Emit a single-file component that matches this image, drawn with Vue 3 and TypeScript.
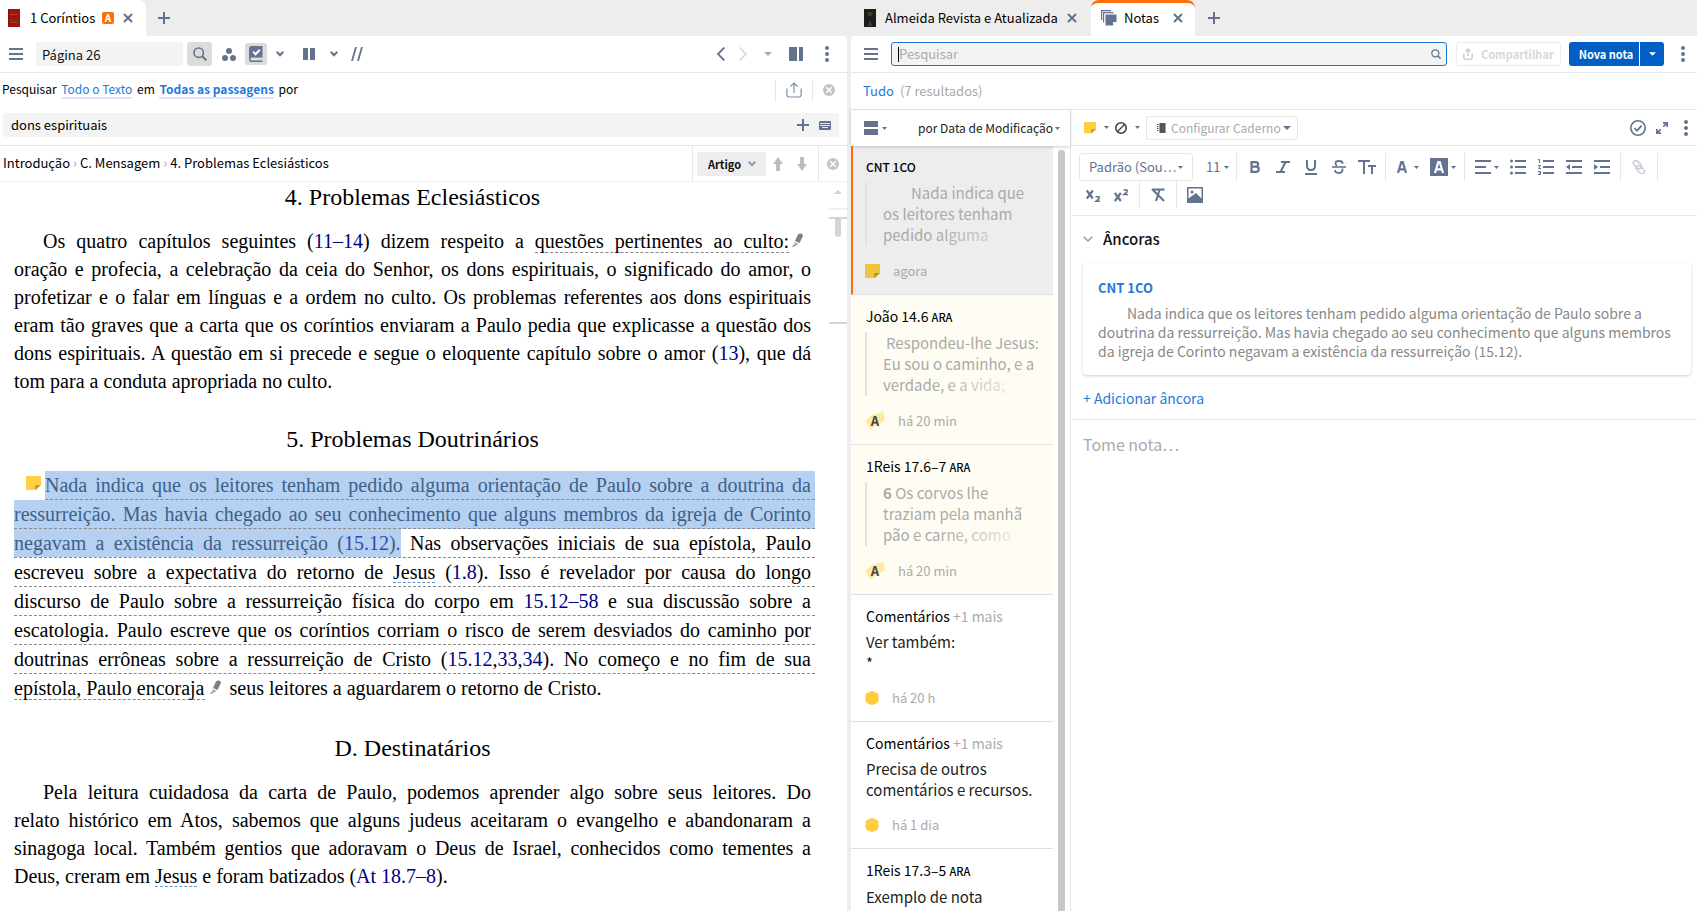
<script setup lang="ts">
import { h, ref } from 'vue'

type Glyph = [number, number, string]

const line = 'fill="none" stroke="currentColor"'
const glyphs: Record<string, Glyph> = {
  menu: [14, 12, '<path d="M0 1h14M0 6h14M0 11h14" stroke="currentColor" stroke-width="2"/>'],
  close: [10, 10, `<path d="M1 1l8 8M9 1l-8 8" ${line} stroke-width="2"/>`],
  plus: [12, 12, `<path d="M6 0v12M0 6h12" ${line} stroke-width="2"/>`],
  search: [14, 14, `<circle cx="5.7" cy="5.7" r="4.7" ${line} stroke-width="1.6"/><path d="M9.2 9.2l4.2 4.2" ${line} stroke-width="2"/>`],
  lens: [10, 10, `<circle cx="4.3" cy="4.3" r="3.5" ${line} stroke-width="1.3"/><path d="M7 7l2.6 2.6" ${line} stroke-width="1.5"/>`],
  trio: [14, 13, '<g fill="currentColor"><circle cx="7" cy="3" r="3"/><circle cx="3" cy="10" r="3"/><circle cx="11" cy="10" r="3"/></g>'],
  bookCheck: [14, 16, '<path fill="currentColor" d="M2.5 0H13.500V11.500H2.500Q1.400 11.500 1.400 13T2.500 14.400H13.500V16H2.500Q0 16 0 13V2.500Q0 0 2.500 0z"/><path d="M4.200 5.800l2.400 2.400 4.200-4.400" fill="none" stroke="#fff" stroke-width="2"/>'],
  chevron: [8, 6, `<path d="M.7.8L4 4.200 7.300.8" ${line} stroke-width="2"/>`],
  thinChevron: [10, 6, `<path d="M.7.7L5 5 9.300.7" ${line} stroke-width="1.4"/>`],
  columns: [12, 12, '<path fill="currentColor" d="M0 0h5v12H0zM7 0h5v12H7z"/>'],
  slashes: [12, 14, `<path d="M1 14L5 0M7 14l4-14" ${line} stroke-width="1.8"/>`],
  back: [8, 14, `<path d="M7.300 .5L1 7l6.300 6.500" ${line} stroke-width="1.8"/>`],
  forward: [8, 14, `<path d="M.7.5L7 7 .7 13.500" ${line} stroke-width="1.8"/>`],
  tri: [8, 4, '<path fill="currentColor" d="M0 0h8L4 4z"/>'],
  smallTri: [5, 3, '<path fill="currentColor" d="M0 0h5L2.500 3z"/>'],
  triUp: [8, 4, '<path fill="currentColor" d="M0 4h8L4 0z"/>'],
  panel: [14, 14, '<path fill="currentColor" d="M0 0h8v14H0zM10 0h4v14h-4z"/>'],
  dots: [4, 16, '<g fill="currentColor"><circle cx="2" cy="2" r="2"/><circle cx="2" cy="8" r="2"/><circle cx="2" cy="14" r="2"/></g>'],
  share: [16, 16, `<path d="M.8 6.500v6q0 2.500 2.500 2.500h9.400q2.500 0 2.500-2.500v-6M8 11V1M4.500 4.500L8 1l3.500 3.500" ${line} stroke-width="1.2"/>`],
  shareSmall: [10, 12, `<path d="M.8 5.500v3.700q0 2 2 2h4.400q2 0 2-2V5.500M5 8V1.500M2.500 3.500L5 1l2.500 2.500" ${line} stroke-width="1.5"/>`],
  clear: [12, 12, '<circle cx="6" cy="6" r="6" fill="currentColor"/><path d="M3.300 3.300l5.400 5.400M8.700 3.300L3.300 8.700" stroke="#fff" stroke-width="1.500"/>'],
  keyboard: [12, 9, '<rect width="12" height="9" rx="1" fill="currentColor"/><path d="M1 2.500h10M1 4.500h10M3 6.500h6" stroke="#dfe3ea"/>'],
  up: [10, 14, '<path fill="currentColor" d="M5 0l5 7H7v7H3V7H0z"/>'],
  down: [10, 14, '<path fill="currentColor" d="M5 14l5-7H7V0H3v7H0z"/>'],
  redBook: [12, 18, '<path fill="#a01212" d="M0 0h12v18H0z"/><path fill="#8d0d0d" d="M0 0h1v18H0z"/><path d="M2 5.500h8M3 13.500h6" stroke="#b93a1c"/><path d="M1 11.500h10" stroke="#5f4a14" stroke-width="2" stroke-dasharray="2 1"/>'],
  blackBook: [12, 18, '<path fill="#1d1d1d" d="M0 0h12v18H0z"/><path d="M3 4h6M4 6h4M6 12v3M4 16h4" stroke="#6b551c"/>'],
  notes: [16, 16, '<g fill="none" stroke="currentColor" stroke-width="1.200"><path d="M.6 10V.6H10"/><path d="M2.600 12.500V2.600H12.500"/></g><path fill="currentColor" d="M4.500 4.500H15.500V11.500L11.500 15.500H4.500z"/><path fill="#fff" d="M12 12h3l-3 3z"/>'],
  rows: [14, 14, '<path fill="currentColor" d="M0 0h14v6H0zM0 8h14v6H0z"/>'],
  sticky: [15, 15, '<path fill="#ffd042" d="M0 1Q0 0 1 0h13q1 0 1 1v8l-5 5H1q-1 0-1-1z"/><path fill="#c79d26" d="M9 14V9h6z"/>'],
  ban: [12, 12, `<circle cx="6" cy="6" r="5.200" ${line} stroke-width="1.600"/><path d="M2.500 9.500l7-7" ${line} stroke-width="1.500"/>`],
  notebook: [9, 10, '<path fill="currentColor" d="M2.500 0H8v10H2.500zM0 1h1.500v1H0zM0 3h1.500v1H0zM0 5h1.500v1H0zM0 7h1.500v1H0z"/><path d="M8.600 0v10" stroke="currentColor" stroke-width=".6"/>'],
  okCircle: [16, 16, `<circle cx="8" cy="8" r="7.200" ${line} stroke-width="1.600"/><path d="M4.500 8.200l2.500 2.500 4.700-5" ${line} stroke-width="1.700"/>`],
  expand: [12, 12, `<path d="M7 .8h4.200V5M11 1L7.300 4.700M.8 7v4.200H5M1 11l3.700-3.700" ${line} stroke-width="1.700"/>`],
  bold: [12, 14, `<path d="M2.500 2.200h4q2.600 0 2.600 2.200T6.500 6.600h-4zM2.500 6.600H7q2.800 0 2.800 2.600T7 11.800H2.500z" ${line} stroke-width="2.200"/>`],
  italic: [14, 14, `<path d="M5 2h9M0 12h9M9.500 2L4.500 12" ${line} stroke-width="2"/>`],
  underline: [12, 15, `<path d="M2 0v6q0 4 4 4t4-4V0M0 14h12" ${line} stroke-width="2"/>`],
  strike: [14, 14, `<path d="M10.800 3.600Q10.500 1 7 1 3.500 1 3.500 3.500 3.500 5 5 5.800M10.500 8.500q.5 4.500-3.500 4.500-3.800 0-4-3" ${line} stroke-width="1.800"/><path d="M0 7h14" stroke="currentColor" stroke-width="1.600"/>`],
  caps: [18, 14, `<path d="M0 1h12M6 1v13M10 6h8M14 6v8" ${line} stroke-width="2"/>`],
  letterA: [10, 12, `<path d="M1 12L4.300 1h1.400L9 12M2.500 8.300h5" ${line} stroke-width="2.200"/>`],
  letterBox: [18, 18, '<path fill="currentColor" d="M0 0h18v18H0z"/><path d="M5 15L8.300 4h1.400L13 15M6.500 11.300h5" fill="none" stroke="#fff" stroke-width="2.200"/>'],
  align: [16, 14, `<path d="M0 1h16M0 7h11M0 13h16" ${line} stroke-width="2"/>`],
  bullets: [16, 16, `<path d="M5 2h11M5 8h11M5 14h11" ${line} stroke-width="2"/><g fill="currentColor"><circle cx="1.500" cy="2" r="1.500"/><circle cx="1.500" cy="8" r="1.500"/><circle cx="1.500" cy="14" r="1.500"/></g>`],
  numbers: [16, 16, `<path d="M5 2h11M5 8h11M5 14h11" ${line} stroke-width="2"/><path d="M0 .5h1.500V4M0 6.500h2.500L.5 9.500h2.500M0 12.500h2.500v3H0M.8 14h1.500" ${line} stroke-width="1"/>`],
  outdent: [16, 14, `<path d="M0 1h16M6 7h10M0 13h16" ${line} stroke-width="2"/><path fill="currentColor" d="M4 4v6L0 7z"/>`],
  indent: [16, 14, `<path d="M0 1h16M6 7h10M0 13h16" ${line} stroke-width="2"/><path fill="currentColor" d="M0 4v6l4-3z"/>`],
  link: [14, 14, `<g transform="rotate(45 7 7)" ${line} stroke-width="1.400"><rect x="-.5" y="4" width="9.500" height="5" rx="2.500"/><rect x="5" y="5.500" width="9.500" height="5" rx="2.500"/></g>`],
  sub: [14, 13, `<path d="M.8 1.500l6 8M6.800 1.500l-6 8" ${line} stroke-width="2.200"/><path d="M9.500 7.800h3.500v1.900l-3 2.500h4" ${line} stroke-width="1.500"/>`],
  sup: [14, 13, `<path d="M.8 4l6 8M6.800 4l-6 8" ${line} stroke-width="2.200"/><path d="M9.500 1h3.500v1.900l-3 2.500h4" ${line} stroke-width="1.500"/>`],
  unformat: [14, 14, `<path d="M2 1.500h11.500M8.500 2L5 13M1 1l12 12" ${line} stroke-width="2"/>`],
  image: [16, 16, '<path fill="currentColor" fill-rule="evenodd" d="M0 0h16v16H0zM1.500 1.500v10L9 6l5.500 5.500v-10z"/><circle cx="5" cy="5" r="1.500" fill="currentColor"/>'],
  pencil: [12, 15, '<path fill="#808080" d="M6 1.500Q7 0 9 .5t2 2.500L7.500 10 3 8z"/><path fill="#a5a5a5" d="M2.500 9l4 2-4 2.500z"/><path fill="#888" d="M0 14l2-3 .5 2.500z"/>'],
  tag: [20, 18, '<path fill="#ffe9a3" d="M0 8.500L7 3 18 0l2 8.500-11 6L6 18z"/>'],
  hexagon: [14, 14, '<path fill="#ffcd3d" d="M7 0q1 0 5 2 1.500 1 1.500 2.500v5q0 1.500-1.500 2.500-4 2-5 2t-5-2Q.5 11 .5 9.500v-5Q.5 3 2 2q4-2 5-2z"/>'],
}

const Icon = (props: { name: string }) => {
  const [w, ht, body] = glyphs[props.name]
  return h('svg', { width: w, height: ht, viewBox: `0 0 ${w} ${ht}`, 'aria-hidden': 'true', innerHTML: body })
}
Icon.props = ['name']

interface Note {
  title: string
  version?: string
  more?: string
  caps?: boolean
  state?: 'selected' | 'highlighted'
  quote?: string
  verse?: string
  lead?: 'lead-wide' | 'lead-small'
  text?: string
  icon: string
  when: string
}

const notes: Note[] = [
  { title: 'CNT 1CO', caps: true, state: 'selected', quote: 'Nada indica que\nos leitores tenham\npedido alguma', lead: 'lead-wide', icon: 'sticky', when: 'agora' },
  { title: 'João 14.6', version: 'ARA', state: 'highlighted', quote: 'Respondeu-lhe Jesus:\nEu sou o caminho, e a\nverdade, e a vida;', lead: 'lead-small', icon: 'tag', when: 'há 20 min' },
  { title: '1Reis 17.6–7', version: 'ARA', state: 'highlighted', verse: '6', quote: ' Os corvos lhe\ntraziam pela manhã\npão e carne, como', icon: 'tag', when: 'há 20 min' },
  { title: 'Comentários', more: '+1 mais', text: 'Ver também:\n*', icon: 'hexagon', when: 'há 20 h' },
  { title: 'Comentários', more: '+1 mais', text: 'Precisa de outros\ncomentários e recursos.', icon: 'hexagon', when: 'há 1 dia' },
  { title: '1Reis 17.3–5', version: 'ARA', text: 'Exemplo de nota', icon: 'hexagon', when: 'há 1 dia' },
]

const page = ref('Página 26')
const terms = ref('dons espirituais')
const noteQuery = ref('')
const noteBody = ref('')
</script>

<template>
  <div class="app">
    <section class="pane">
      <nav class="tabs">
        <div class="tab first">
          <Icon name="redBook" />
          <span class="tab-name book">1 Coríntios</span>
          <span class="badge">A</span>
          <button class="plain" aria-label="Fechar guia"><Icon name="close" /></button>
        </div>
        <button class="plain add" aria-label="Nova guia"><Icon name="plus" /></button>
      </nav>

      <div class="bar tools">
        <button class="plain" aria-label="Menu"><Icon name="menu" /></button>
        <input v-model="page" class="field" aria-label="Referência" />
        <button class="tool on" aria-label="Pesquisar"><Icon name="search" /></button>
        <button class="tool trio" aria-label="Recursos paralelos"><Icon name="trio" /></button>
        <button class="tool on check" aria-label="Filtros visuais"><Icon name="bookCheck" /></button>
        <button class="tool more-filters" aria-label="Opções de filtros"><Icon name="chevron" /></button>
        <button class="tool cols" aria-label="Colunas"><Icon name="columns" /></button>
        <button class="tool more-cols" aria-label="Opções de colunas"><Icon name="chevron" /></button>
        <button class="tool parallel" aria-label="Passagens paralelas"><Icon name="slashes" /></button>
        <span class="grow"></span>
        <div class="history">
          <button class="plain back" aria-label="Voltar"><Icon name="back" /></button>
          <button class="plain faint" aria-label="Avançar"><Icon name="forward" /></button>
          <button class="plain gray past" aria-label="Histórico"><Icon name="tri" /></button>
          <button class="plain" aria-label="Painel"><Icon name="panel" /></button>
          <button class="plain more" aria-label="Mais"><Icon name="dots" /></button>
        </div>
      </div>

      <div class="search">
        <div class="scope">
          <span class="phrase">Pesquisar <a href="#">Todo o Texto</a> em <a href="#" class="strong">Todas as passagens</a> por</span>
          <span class="grow"></span>
          <div class="scope-share"><button class="plain pale" aria-label="Compartilhar pesquisa"><Icon name="share" /></button></div>
          <button class="plain silver" aria-label="Fechar pesquisa"><Icon name="clear" /></button>
        </div>
        <div class="terms">
          <input v-model="terms" aria-label="Termos de pesquisa" />
          <button class="plain" aria-label="Adicionar termo"><Icon name="plus" /></button>
          <button class="plain" aria-label="Teclado"><Icon name="keyboard" /></button>
        </div>
      </div>

      <div class="locator">
        <div class="crumbs">
          <a href="#">Introdução</a><i>›</i><a href="#">C. Mensagem</a><i>›</i><a href="#">4. Problemas Eclesiásticos</a>
        </div>
        <div class="steps">
          <label class="drop article">
            <select aria-label="Unidade de navegação"><option>Artigo</option></select>
            <Icon name="chevron" />
          </label>
          <button class="plain" aria-label="Anterior"><Icon name="up" /></button>
          <button class="plain" aria-label="Próximo"><Icon name="down" /></button>
        </div>
        <button class="plain silver end" aria-label="Fechar localizador"><Icon name="clear" /></button>
      </div>

      <div class="reader">
        <article>
          <h2>4. Problemas Eclesiásticos</h2>
          <p>
            <span class="row indent">Os quatro capítulos seguintes (<a href="#">11–14</a>) dizem respeito a <span class="dotted">questões pertinentes ao culto:</span><Icon name="pencil" class="pencil" /></span>
            <span class="row">oração e profecia, a celebração da ceia do Senhor, os dons espirituais, o significado do amor, o</span>
            <span class="row">profetizar e o falar em línguas e a ordem no culto. Os problemas referentes aos dons espirituais</span>
            <span class="row">eram tão graves que a carta que os coríntios enviaram a Paulo pedia que explicasse a questão dos</span>
            <span class="row">dons espirituais. A questão em si precede e segue o eloquente capítulo sobre o amor (<a href="#">13</a>), que dá</span>
            <span class="row last">tom para a conduta apropriada no culto.</span>
          </p>
          <h2>5. Problemas Doutrinários</h2>
          <p class="noted">
            <span class="with-icon">
              <Icon name="sticky" />
              <span class="row dash marked">Nada indica que os leitores tenham pedido alguma orientação de Paulo sobre a doutrina da</span>
            </span>
            <span class="row dash marked">ressurreição. Mas havia chegado ao seu conhecimento que alguns membros da igreja de Corinto</span>
            <span class="row dash"><mark>negavam a existência da ressurreição (<a href="#">15.12</a>).</mark> Nas observações iniciais de sua epístola, Paulo</span>
            <span class="row dash">escreveu sobre a expectativa do retorno de <a href="#" class="person">Jesus</a> (<a href="#">1.8</a>). Isso é revelador por causa do longo</span>
            <span class="row dash">discurso de Paulo sobre a ressurreição física do corpo em <a href="#">15.12–58</a> e sua discussão sobre a</span>
            <span class="row dash">escatologia. Paulo escreve que os coríntios corriam o risco de serem desviados do caminho por</span>
            <span class="row dash">doutrinas errôneas sobre a ressurreição de Cristo (<a href="#">15.12</a>,<a href="#">33</a>,<a href="#">34</a>). No começo e no fim de sua</span>
            <span class="row last"><span class="dotted">epístola, Paulo encoraja</span><Icon name="pencil" class="pencil" /> seus leitores a aguardarem o retorno de Cristo.</span>
          </p>
          <h2>D. Destinatários</h2>
          <p>
            <span class="row indent">Pela leitura cuidadosa da carta de Paulo, podemos aprender algo sobre seus leitores. Do</span>
            <span class="row">relato histórico em Atos, sabemos que alguns judeus aceitaram o evangelho e abandonaram a</span>
            <span class="row">sinagoga local. Também gentios que adoravam o Deus de Israel, conhecidos como tementes a</span>
            <span class="row last">Deus, creram em <a href="#" class="person">Jesus</a> e foram batizados (<a href="#">At 18.7–8</a>).</span>
          </p>
        </article>
        <div class="gutter">
          <Icon name="triUp" />
          <span class="tick light"></span>
          <span class="tick"></span>
          <span class="thumb"></span>
          <span class="tick"></span>
        </div>
      </div>
    </section>

    <section class="pane">
      <nav class="tabs">
        <div class="tab idle">
          <Icon name="blackBook" />
          <span class="tab-name">Almeida Revista e Atualizada</span>
          <button class="plain" aria-label="Fechar guia"><Icon name="close" /></button>
        </div>
        <div class="tab current">
          <Icon name="notes" />
          <span class="tab-name">Notas</span>
          <button class="plain" aria-label="Fechar guia"><Icon name="close" /></button>
        </div>
        <button class="plain add" aria-label="Nova guia"><Icon name="plus" /></button>
      </nav>

      <div class="bar notes-bar">
        <button class="plain" aria-label="Menu"><Icon name="menu" /></button>
        <label class="finder">
          <span class="caret"></span>
          <input v-model="noteQuery" placeholder="Pesquisar" aria-label="Pesquisar notas" />
          <Icon name="lens" />
        </label>
        <button class="share" disabled><Icon name="shareSmall" />Compartilhar</button>
        <div class="new-note">
          <button>Nova nota</button>
          <button class="arrow" aria-label="Mais tipos de nota"><Icon name="tri" /></button>
        </div>
        <button class="plain" aria-label="Mais"><Icon name="dots" /></button>
      </div>

      <div class="summary"><a href="#">Tudo</a> <span>(7 resultados)</span></div>

      <div class="split">
        <aside>
          <div class="sort">
            <button class="plain layout" aria-label="Exibição"><Icon name="rows" /><Icon name="smallTri" /></button>
            <label class="drop">
              <select aria-label="Ordenar notas"><option>por Data de Modificação</option></select>
              <Icon name="smallTri" />
            </label>
          </div>
          <div class="list">
            <div class="cards">
              <article v-for="(note, i) in notes" :key="i" class="card" :class="note.state">
                <h3 :class="{ caps: note.caps }">
                  {{ note.title }} <small v-if="note.version">{{ note.version }}</small><span v-if="note.more">{{ note.more }}</span>
                </h3>
                <blockquote v-if="note.quote" :class="note.lead"><b v-if="note.verse">{{ note.verse }}</b>{{ note.quote }}</blockquote>
                <div v-else class="body">{{ note.text }}</div>
                <footer>
                  <span class="mark"><Icon :name="note.icon" /><b v-if="note.icon === 'tag'">A</b></span>
                  {{ note.when }}
                </footer>
              </article>
            </div>
            <span class="scroll"></span>
          </div>
        </aside>

        <main>
          <div class="note-tools">
            <button class="plain" aria-label="Ícone da nota"><Icon name="sticky" class="mini" /><Icon name="smallTri" /></button>
            <button class="plain ban" aria-label="Estilo de realce"><Icon name="ban" /><Icon name="smallTri" /></button>
            <label class="drop notebook">
              <Icon name="notebook" />
              <select aria-label="Caderno"><option>Configurar Caderno</option></select>
              <Icon name="tri" />
            </label>
            <span class="grow"></span>
            <button class="plain" aria-label="Concluído"><Icon name="okCircle" /></button>
            <button class="plain" aria-label="Expandir"><Icon name="expand" /></button>
            <button class="plain last-dots" aria-label="Mais"><Icon name="dots" /></button>
          </div>

          <div class="format">
            <div class="group">
              <label class="drop family">
                <select aria-label="Fonte"><option>Padrão (Sou…</option></select>
                <Icon name="smallTri" />
              </label>
              <label class="drop size">
                <select aria-label="Tamanho"><option>11</option></select>
                <Icon name="smallTri" />
              </label>
            </div>
            <div class="group">
              <button aria-label="Negrito"><Icon name="bold" /></button>
              <button aria-label="Itálico"><Icon name="italic" /></button>
              <button aria-label="Sublinhado"><Icon name="underline" /></button>
              <button aria-label="Tachado"><Icon name="strike" /></button>
              <button aria-label="Versalete"><Icon name="caps" /></button>
            </div>
            <div class="group">
              <button class="wide" aria-label="Cor do texto"><Icon name="letterA" /><Icon name="smallTri" /></button>
              <button class="wide tight" aria-label="Cor de realce"><Icon name="letterBox" /><Icon name="smallTri" /></button>
            </div>
            <div class="group">
              <button class="wide tight" aria-label="Alinhamento"><Icon name="align" /><Icon name="smallTri" /></button>
              <button aria-label="Lista"><Icon name="bullets" /></button>
              <button aria-label="Lista numerada"><Icon name="numbers" /></button>
              <button aria-label="Diminuir recuo"><Icon name="outdent" /></button>
              <button aria-label="Aumentar recuo"><Icon name="indent" /></button>
            </div>
            <div class="group">
              <button class="off" aria-label="Link"><Icon name="link" /></button>
            </div>
            <div class="group">
              <button aria-label="Subscrito"><Icon name="sub" /></button>
              <button aria-label="Sobrescrito"><Icon name="sup" /></button>
            </div>
            <div class="group">
              <button aria-label="Limpar formatação"><Icon name="unformat" /></button>
            </div>
            <div class="group">
              <button aria-label="Imagem"><Icon name="image" /></button>
            </div>
          </div>

          <div class="anchors">
            <button class="toggle"><Icon name="thinChevron" />Âncoras</button>
            <div class="anchor">
              <a href="#">CNT 1CO</a>
              <p>Nada indica que os leitores tenham pedido alguma orientação de Paulo sobre a doutrina da ressurreição. Mas havia chegado ao seu conhecimento que alguns membros da igreja de Corinto negavam a existência da ressurreição (15.12).</p>
            </div>
            <button class="add-anchor">+ Adicionar âncora</button>
          </div>
          <textarea v-model="noteBody" placeholder="Tome nota…" aria-label="Texto da nota"></textarea>
        </main>
      </div>
    </section>
  </div>
</template>

<style>
body {
  margin: 0;
  background: #ededed;
}
</style>

<style scoped>
* {
  box-sizing: border-box;
}
.app {
  --ink: #63738f;
  --rule: #e6e6e6;
  --blue: #1f79db;
  display: grid;
  grid-template-columns: minmax(0, 847fr) minmax(0, 846fr);
  gap: 4px;
  height: 100vh;
  overflow: hidden;
  background: #ededed;
  color: #111;
  font: 13px/20px "Noto Sans CJK SC", "Noto Sans", sans-serif;
}
svg {
  display: block;
  flex: none;
}
button,
input,
select,
textarea {
  font: inherit;
  color: inherit;
  border: 0;
  padding: 0;
  margin: 0;
  background: none;
  outline: 0;
}
a {
  color: var(--blue);
  text-decoration: none;
}
.grow {
  flex: 1;
}
.plain {
  display: flex;
  align-items: center;
  color: var(--ink);
}
.drop {
  display: flex;
  align-items: center;
}
.drop select {
  appearance: none;
}
.pane {
  display: flex;
  flex-direction: column;
  min-width: 0;
  min-height: 0;
}

.tabs {
  display: flex;
  height: 36px;
}
.tab {
  display: flex;
  align-items: center;
  color: var(--ink);
}
.first {
  width: 146px;
  padding-left: 8px;
  background: #fff;
  border-radius: 0 8px 0 0;
}
.tab-name {
  white-space: nowrap;
  color: #000;
}
.book {
  width: 72px;
  margin-left: 10px;
}
.badge {
  width: 12px;
  height: 12px;
  margin-right: 9px;
  border-radius: 2px;
  background: #ff6c0a;
  color: #fff;
  font-size: 10px;
  font-weight: 700;
  line-height: 12px;
  text-align: center;
}
.add {
  padding-left: 12px;
}
.idle {
  width: 240px;
  padding-left: 13px;
}
.idle .tab-name {
  width: 182px;
  margin-left: 9px;
}
.current {
  width: 104px;
  padding: 0 0 0 10px;
  border-top: 3px solid #ff6c0a;
  border-radius: 8px 8px 0 0;
  background: #fff;
}
.current > * {
  margin-bottom: 3px;
}
.current .tab-name {
  width: 49px;
  margin-left: 7px;
}
.current + .add {
  padding-left: 13px;
}

.bar {
  display: flex;
  align-items: center;
  height: 37px;
  border-bottom: 1px solid var(--rule);
  background: #fff;
}
.tools {
  padding: 0 18px 0 9px;
  border-radius: 0 4px 0 0;
}
.field {
  width: 147px;
  height: 24px;
  margin: 0 4px 0 13px;
  padding: 0 6px;
  border-radius: 3px;
  background: #f3f3f3;
}
.tool {
  display: flex;
  align-items: center;
  justify-content: center;
  width: 25px;
  height: 24px;
  border-radius: 3px;
  color: var(--ink);
}
.on {
  background: #dcdcdc;
}
.trio {
  width: 33px;
}
.check {
  width: 22px;
  height: 22px;
}
.more-filters {
  width: 26px;
}
.cols {
  width: 32px;
}
.more-cols {
  width: 18px;
}
.parallel {
  width: 28px;
}
.history {
  display: flex;
  align-items: center;
}
.back {
  margin-right: 14px;
}
.faint {
  margin-right: 17px;
  color: #d9dde4;
}
.gray {
  color: #a8a8a8;
}
.past {
  margin-right: 17px;
}
.more {
  margin-left: 22px;
}

.search {
  padding-bottom: 8px;
  border-bottom: 1px solid var(--rule);
  background: #fff;
}
.scope {
  display: flex;
  align-items: center;
  height: 34px;
  margin-bottom: 6px;
  padding: 0 12px 0 2px;
  color: #000;
}
.phrase {
  padding-bottom: 2px;
  font-size: 12px;
  line-height: 18px;
}
.scope a {
  margin: 0 2px;
  border-bottom: 2px solid #dbe8fa;
}
.strong {
  font-weight: 700;
}
.scope-share {
  display: flex;
  height: 23px;
  margin-right: 10px;
  padding: 0 10px;
  border: solid var(--rule);
  border-width: 0 1px;
}
.pale {
  color: #7f90ae;
}
.silver {
  color: #c4c4c4;
}
.terms {
  display: flex;
  align-items: center;
  gap: 10px;
  height: 24px;
  margin: 0 8px 0 3px;
  padding: 0 8px;
  border-radius: 3px;
  background: #f3f3f3;
}
.terms input {
  flex: 1;
  color: #000;
}
.locator {
  display: flex;
  align-items: center;
  height: 36px;
  padding-right: 8px;
  border-bottom: 1px solid #f0f0f0;
  background: #fff;
}
.crumbs {
  flex: 1;
  padding: 0 0 2px 3px;
}
.crumbs a {
  color: #000;
}
.crumbs i {
  margin: 0 3px;
  color: #aaa;
  font-style: normal;
}
.steps {
  display: flex;
  align-items: center;
  height: 35px;
  padding: 0 6px 0 4px;
  border: solid var(--rule);
  border-width: 0 1px;
}
.steps .plain {
  margin-left: 7px;
  color: #bdbdbd;
}
.steps .plain + .plain {
  margin: 0 5px 0 14px;
}
.article {
  width: 69px;
  height: 24px;
  gap: 6px;
  padding-left: 11px;
  border-radius: 3px;
  background: #ededed;
  color: #8c9ab3;
}
.article select {
  color: #111;
  font-size: 11px;
  font-weight: 700;
}
.end {
  margin-left: 8px;
}

.reader {
  display: flex;
  flex: 1;
  min-height: 0;
  background: #fff;
}
.reader article {
  flex: 1;
  min-width: 0;
  padding: 1px 0 0 14px;
  color: #000;
  font: 20px/28px "Liberation Serif", serif;
}
.reader h2 {
  margin: 0;
  font-size: 24px;
  font-weight: 400;
  line-height: 28px;
  text-align: center;
}
.reader p {
  margin: 16px 0 30px;
}
.reader p.noted {
  margin: 18px 0 32px;
}
.reader a {
  color: #000080;
}
.row {
  display: block;
  text-align: justify;
  text-align-last: justify;
}
.row.last {
  text-align-last: left;
}
.indent {
  padding-left: 29px;
}
.dotted {
  border-bottom: 1px dashed #888;
}
.dash {
  margin-right: -4px;
  padding-right: 4px;
  border-bottom: 1px dashed #888;
}
.marked,
.noted mark {
  background: #b5d0f0;
  color: #3d618b;
}
.noted mark {
  padding: 3px 0;
}
.noted mark a {
  color: #2f48b0;
}
.with-icon {
  display: flex;
  padding-left: 12px;
}
.with-icon svg {
  margin: 5px 4px 0 0;
}
.with-icon .row {
  flex: 1;
}
.reader .person {
  color: inherit;
  text-decoration: underline dashed #5a9be6 1px;
  text-underline-offset: 3px;
}
.pencil {
  display: inline-block;
  margin: 0 3px 0 5px;
}
.row:not(.last) .pencil {
  margin: 0 7px 0 3px;
}
.gutter {
  display: flex;
  flex: none;
  flex-direction: column;
  width: 18px;
  margin-left: 18px;
  color: #d0d0d0;
}
.gutter svg {
  margin: 8px 0 14px 5px;
}
.tick {
  height: 2px;
  background: #d4d4d4;
}
.light {
  margin-bottom: 7px;
  background: #f0f0f0;
}
.thumb {
  width: 6px;
  height: 18px;
  margin: 0 0 85px 6px;
  border-radius: 0 0 3px 3px;
  background: #d4d4d4;
}

.notes-bar {
  padding: 0 12px 0 13px;
  border-radius: 4px 0 0 0;
}
.finder {
  display: flex;
  flex: 1;
  align-items: center;
  height: 24px;
  margin: 0 9px 0 13px;
  padding: 0 5px 0 6px;
  border: 1px solid #1a75d6;
  border-radius: 3px;
  background: #f3f3f3;
  color: var(--ink);
}
.caret {
  width: 1px;
  height: 15px;
  background: #000;
}
.finder input {
  flex: 1;
  min-width: 0;
  color: #111;
}
.finder input::placeholder {
  color: #aaa;
}
.share {
  display: flex;
  align-items: center;
  gap: 8px;
  width: 105px;
  height: 24px;
  padding-left: 6px;
  border: 1px solid #ececec;
  border-radius: 3px;
  color: #d8d8d8;
  font-size: 11px;
  font-weight: 700;
}
.share svg {
  color: #c9cfd9;
}
.new-note {
  display: flex;
  width: 95px;
  height: 24px;
  margin: 0 17px 0 8px;
  overflow: hidden;
  border-radius: 3px;
  background: #005ec4;
  color: #fff;
  font-size: 11px;
  font-weight: 700;
}
.new-note button {
  display: flex;
  flex: 1;
  align-items: center;
  justify-content: center;
  padding-left: 4px;
  white-space: nowrap;
}
.new-note .arrow {
  flex: none;
  width: 25px;
  padding: 0;
  border-left: 1px solid #fff;
}
.arrow svg {
  width: 7px;
}
.summary {
  height: 37px;
  padding: 8px 12px;
  border-bottom: 1px solid var(--rule);
  background: #fff;
  color: #aaa;
}
.summary span {
  margin-left: 3px;
}

.split {
  display: flex;
  flex: 1;
  min-height: 0;
  background: #fff;
}
aside {
  display: flex;
  flex: none;
  flex-direction: column;
  width: 220px;
  border-right: 1px solid var(--rule);
}
.sort {
  z-index: 1;
  display: flex;
  flex: none;
  align-items: center;
  justify-content: space-between;
  height: 36px;
  padding: 0 10px 0 13px;
  box-shadow: 0 1px 3px #0003;
  color: var(--ink);
}
.sort .drop {
  gap: 1px;
}
.sort select {
  color: #222;
  font-size: 12px;
}
.layout {
  gap: 4px;
}
.list {
  display: flex;
  flex: 1;
  min-height: 0;
}
.cards {
  width: 202px;
  overflow: hidden;
}
.scroll {
  width: 7px;
  margin: 4px 0 0 5px;
  border-radius: 3px 3px 0 0;
  background: #c8c8c8;
}
.card {
  padding: 11px 12px 12px 14px;
  border-bottom: 1px solid #e0e0e0;
}
.selected {
  padding-left: 12px;
  border-left: 2px solid #ff6c0a;
  background: #ededed;
}
.selected svg {
  filter: brightness(0.94);
}
.highlighted {
  background: #fffdf3;
}
.card h3 {
  margin: 0 1px 5px;
  color: #000;
  font-size: 14px;
  font-weight: 400;
  line-height: 20px;
}
.card h3.caps {
  font-size: 12px;
  font-weight: 500;
}
.card small {
  font-size: 11px;
  font-weight: 500;
}
.card h3 span {
  color: #aaa;
}
.card blockquote,
.body {
  margin: 0 0 14px;
  font-size: 15px;
  line-height: 21px;
  white-space: pre-line;
}
.card blockquote {
  position: relative;
  margin-right: -8px;
  padding: 0 0 1px 16px;
  border-left: 2px solid #e2e2e2;
  color: #aaa;
}
.card blockquote::after {
  position: absolute;
  right: 0;
  bottom: 0;
  width: 112px;
  height: 21px;
  background: linear-gradient(to right, #fffdf300, #fffdf3 90%);
  content: "";
}
.selected blockquote::after {
  background: linear-gradient(to right, #ededed00, #ededed 90%);
}
.lead-wide {
  text-indent: 28px;
}
.lead-small {
  text-indent: 3px;
}
.body {
  padding-left: 1px;
  color: #222;
}
.card footer {
  display: flex;
  align-items: center;
  gap: 13px;
  height: 22px;
  color: #aaa;
}
.mark {
  display: grid;
  align-items: center;
  justify-items: center;
}
.mark > * {
  grid-area: 1 / 1;
}
.mark b {
  color: #444;
}

main {
  display: flex;
  flex: 1;
  flex-direction: column;
  min-width: 0;
}
.note-tools {
  display: flex;
  align-items: center;
  height: 36px;
  padding: 0 9px 0 13px;
  border-bottom: 1px solid var(--rule);
}
.note-tools .plain {
  gap: 8px;
}
.note-tools .mini {
  width: 12px;
  height: 12px;
}
.note-tools .ban {
  margin: 0 6px 0 6px;
}
.ban svg:first-child {
  color: #444;
}
.notebook {
  width: 152px;
  height: 24px;
  padding: 0 6px 0 10px;
  border: 1px solid var(--rule);
  border-radius: 3px;
  color: var(--ink);
}
.notebook svg:first-child {
  color: #555;
}
.notebook select {
  flex: 1;
  min-width: 0;
  margin-left: 5px;
  color: #aaa;
  font-size: 12px;
}
.note-tools button + button {
  margin-left: 10px;
}
.note-tools .ban.plain {
  margin-left: 6px;
}
.note-tools .last-dots.plain {
  margin-left: 16px;
}
.format {
  display: flex;
  flex-wrap: wrap;
  padding: 7px 0 6px 4px;
  border-bottom: 1px solid var(--rule);
  color: var(--ink);
}
.group {
  display: flex;
  height: 28px;
  padding: 0 4px;
  border-right: 1px solid var(--rule);
}
.group:last-child {
  border: 0;
}
.group button {
  display: flex;
  align-items: center;
  justify-content: center;
  width: 28px;
  color: var(--ink);
}
.group button.wide {
  width: 35px;
  gap: 7px;
}
.group button.tight {
  gap: 3px;
}
.group button.off {
  color: #c5ccd8;
}
.family {
  width: 114px;
  padding: 0 9px;
  border: 1px solid var(--rule);
  border-radius: 3px;
}
.family select {
  flex: 1;
  min-width: 0;
}
.size {
  width: 39px;
  padding-left: 13px;
  gap: 3px;
}
.anchors {
  padding: 13px 6px 11px 12px;
  border-bottom: 1px solid var(--rule);
}
.toggle {
  display: flex;
  align-items: center;
  gap: 10px;
  margin-bottom: 14px;
  color: #111;
  font-size: 15px;
  font-weight: 500;
}
.toggle svg {
  color: #999;
}
.anchor {
  padding: 15px 15px 14px;
  border-radius: 4px;
  box-shadow: 0 1px 3px #0003;
}
.anchor a {
  display: block;
  font-weight: 700;
}
.anchor p {
  margin: 6px 0 0;
  color: #888;
  font-size: 14px;
  line-height: 19px;
  text-indent: 29px;
}
.add-anchor {
  display: block;
  margin-top: 13px;
  color: var(--blue);
  font-size: 14px;
}
textarea {
  flex: 1;
  padding: 14px 12px;
  resize: none;
  font-size: 16px;
}
textarea::placeholder {
  color: #aaa;
}
</style>
